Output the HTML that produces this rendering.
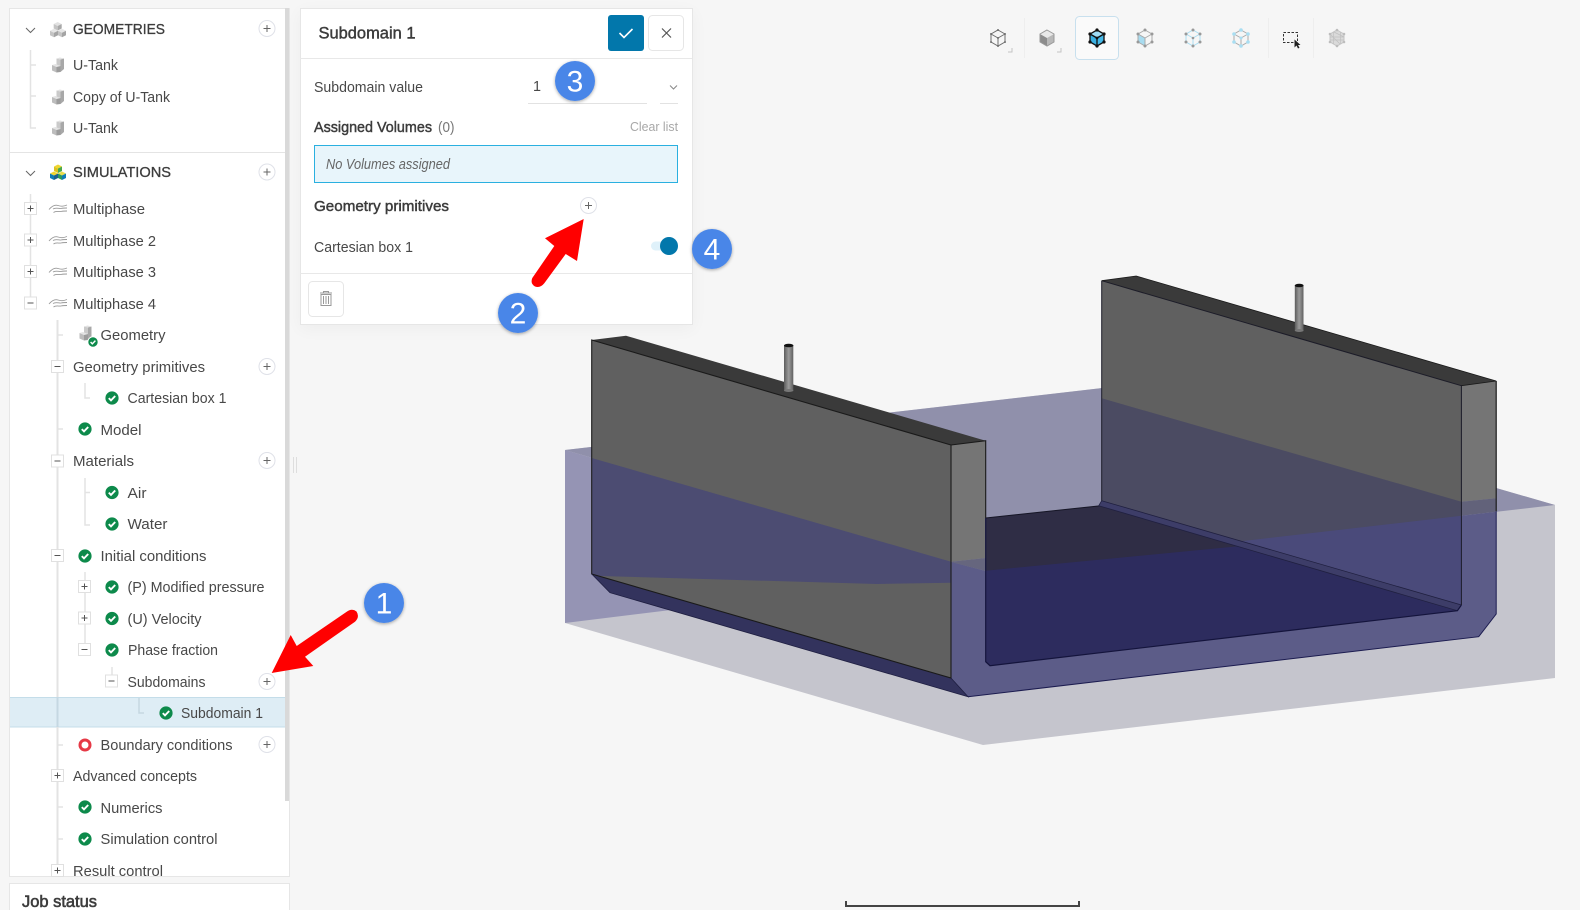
<!DOCTYPE html>
<html lang="en"><head><meta charset="utf-8"><title>Subdomain 1</title>
<style>
html,body{margin:0;padding:0;width:1580px;height:910px;overflow:hidden;background:#f6f6f6}
.p{position:absolute;background:#fff;box-sizing:border-box;border:1px solid #e6e6e6}
svg{position:absolute;left:0;top:0;display:block}
text{font-family:"Liberation Sans",sans-serif;font-size:15px;fill:#484848}
.b{stroke:#3c3c3c;stroke-width:.3;fill:#3c3c3c}
.n{fill:#fff;font-size:30px}
</style></head><body>
<div class="p" style="left:9px;top:8px;width:281px;height:869px"></div>
<div class="p" style="left:9px;top:883px;width:281px;height:27px;border-bottom:0"></div>
<div class="p" style="left:300px;top:8px;width:393px;height:317px;box-shadow:0 4px 16px rgba(0,0,0,.04)"></div>
<svg width="1580" height="910" viewBox="0 0 1580 910" xmlns="http://www.w3.org/2000/svg">
<defs>
<filter id="sh" x="-30%" y="-30%" width="160%" height="160%"><feDropShadow dx="0" dy="1" stdDeviation="1.6" flood-color="#000" flood-opacity=".35"/></filter>
<linearGradient id="pipe" x1="0" x2="1" y1="0" y2="0"><stop offset="0" stop-color="#5c5c5c"/><stop offset=".5" stop-color="#9a9a9a"/><stop offset="1" stop-color="#606060"/></linearGradient>
<g id="ok"><circle r="6.6" fill="#0d8a4b"/><path d="M-3.200 .1 -1 2.400 3.200 -2" fill="none" stroke="#fff" stroke-width="1.900"/></g>
<g id="pl"><circle r="8" fill="#fff" stroke="#dfe1e8"/><path d="M-3.500 0H3.500M0-3.500V3.500" stroke="#666" stroke-width="1"/></g>
<g id="tp"><rect x="-6" y="-6" width="12" height="12" fill="#fff" stroke="#e0e0e0"/><path d="M-3 0H3M0-3V3" stroke="#555"/></g>
<g id="tm"><rect x="-6" y="-6" width="12" height="12" fill="#fff" stroke="#e0e0e0"/><path d="M-3 0H3" stroke="#555"/></g>
<g id="part"><path d="M-2-6.500 1.500-7.500 5.500-6.500 2-5.500Z" fill="#e2e2e2"/><path d="M-2-6.500 2-5.500V1L-2 0Z" fill="#cacaca"/><path d="M2-5.500 5.500-6.500V4L2 7Z" fill="#a8a8a8"/><path d="M-6.500 0-3-1 2 1-2 2Z" fill="#e4e4e4"/><path d="M-6.500 0-2 2V7.500L-6.500 5.500Z" fill="#bdbdbd"/><path d="M-2 2 2 1V7L-2 7.500Z" fill="#9c9c9c"/></g>
<g id="flow" fill="none" stroke="#999" stroke-width=".9"><path d="M-9 1.500C-6-2-3-3.500 0-2.500S5-1.500 9-3"/><path d="M-5 1C-2-1 1 1 3 .5S7 0 9 0"/><path d="M-4.500 4.500C-2 2.500 1 4 3 3.500S7 3 9 3"/></g>
<g id="hexw"><path d="M0-8 7-4V4L0 8-7 4V-4ZM0 0V8M0 0-7-4M0 0 7-4" fill="none"/></g>
</defs>

<!-- viewport 3D model -->
<path d="M565 450 1137 384 1555 505V678L983 745 565 623Z" fill="#c5c5cd"/>
<path d="M565 450 1137 384 1555 505 983 571Z" fill="#9090ab"/>
<path d="M565 450 720 495V604L565 623Z" fill="#9594b4"/>
<!-- floor -->
<path d="M985.700 518 1100.700 505.700 1457.400 610.700 990 665.700 985.700 661.700Z" fill="#2d2c5e"/>
<path d="M985.700 518 1100.700 505.700 1241 546 985.700 570.700Z" fill="#2f2d45"/>
<path d="M985.700 518 1100.700 505.700" stroke="#161626" fill="none"/>
<!-- right wall -->
<path d="M1101.700 280.700 1461.400 385.700V605L1101.700 500.700Z" fill="#606060"/>
<path d="M1101.700 398.300 1461.400 501.700V605L1101.700 500.700Z" fill="#4b4b62"/>
<path d="M1241 541.200 1461.400 515.800V605Z" fill="#4a4a7a"/>
<path d="M1101.700 500.700 1461.400 605 1457.400 610.700 1098.700 505.700Z" fill="#3d3d68" stroke="#202040" stroke-width=".8"/>
<path d="M1101.700 280.700 1136.200 276 1496.200 381 1461.400 385.700Z" fill="#3a3a3a"/>
<path d="M1461.400 385.700 1496.200 381V498.300L1461.400 501.700Z" fill="#757575"/>
<path d="M1461.400 501.700 1496.200 498.300V511.700L1461.400 515.700Z" fill="#62627a"/>
<!-- U section -->
<path d="M951 561.700 985.700 571V661.700L990 665.700 1457.400 610.700 1461.400 605V515.700L1496.200 511.700V614L1478.700 636.700 968 696.700 951 678Z" fill="#5c5c88"/>
<path d="M951 445 985.700 441V558L951 561.700Z" fill="#757575"/>
<path d="M951 561.700 985.700 558V571L951 562Z" fill="#66667e"/>
<path d="M985.700 518V661.700L990 665.700 1457.400 610.700 1461.400 605" fill="none" stroke="#14143c" stroke-width="1.200"/>
<path d="M968 696.700 1478.700 636.700 1496.200 614V511" fill="none" stroke="#1c1c50" stroke-width="1"/>
<path d="M1496.200 381V511" fill="none" stroke="#1a1a1a" stroke-width="1.200"/>
<path d="M1101.700 280.700 1461.400 385.700V605M1101.700 280.700V500.700" fill="none" stroke="#1c1c28" stroke-width="1"/>
<path d="M1101.700 280.700 1136.200 276 1496.200 381 1461.400 385.700" fill="none" stroke="#1a1a1a" stroke-width=".8"/>
<!-- left wall -->
<path d="M591.700 574 951 678 968 696.700 610 592.700Z" fill="#33335d"/>
<path d="M591.700 340 951 445V678L591.700 574Z" fill="#606060"/>
<path d="M591.700 458 951 561.700V582.700L876.700 584 600 576 591.700 574Z" fill="#4c4c72"/>
<path d="M591.700 340 626 335.700 985.700 440.700 951 445Z" fill="#3a3a3a"/>
<path d="M591.700 340 951 445V678L591.700 574ZM951 445 985.700 440.700V518" fill="none" stroke="#1a1a1a" stroke-width="1.100"/>
<path d="M591.700 574 610 592.700 968 696.700 951 678" fill="none" stroke="#1e1e40" stroke-width=".8"/>
<rect x="784" y="345" width="9.300" height="45.700" fill="url(#pipe)"/><ellipse cx="788.700" cy="345.500" rx="4.700" ry="1.800" fill="#111"/><ellipse cx="788.700" cy="390.500" rx="4.700" ry="1.500" fill="#777"/>
<rect x="1294.800" y="285" width="8.700" height="46" fill="url(#pipe)"/><ellipse cx="1299.200" cy="285.500" rx="4.400" ry="1.800" fill="#111"/><ellipse cx="1299.200" cy="330.500" rx="4.400" ry="1.500" fill="#777"/>
<!-- scale bar -->
<path d="M846 901V906H1079V901" fill="none" stroke="#444" stroke-width="2"/>

<!-- toolbar -->
<path d="M1024.500 18V58M1268.500 18V58M1313.500 18V58" stroke="#eeeeee"/>
<rect x="1075.500" y="16.500" width="43" height="43" rx="4" fill="#fafafa" stroke="#c8e0ee"/>
<path d="M1008 52H1012V48M1057 52H1061V48" fill="none" stroke="#c4c4c4"/>
<g transform="translate(998 38)" stroke="#6e6e6e" stroke-width="1"><use href="#hexw"/><g fill="#6e6e6e" stroke="none"><circle cy="-8" r="1"/><circle cx="-7" cy="-4" r="1"/><circle cx="7" cy="-4" r="1"/><circle cx="-7" cy="4" r="1"/><circle cx="7" cy="4" r="1"/><circle cy="8" r="1"/><circle r="1"/></g></g>
<g transform="translate(1047 38)"><path d="M0-8 7-4 0 0-7-4Z" fill="#e8e8e8"/><path d="M-7-4 0 0V8L-7 4Z" fill="#8c8c8c"/><path d="M7-4 0 0V8L7 4Z" fill="#b8b8b8"/><path d="M0-8 7-4V4L0 8-7 4V-4Z" fill="none" stroke="#999"/></g>
<g transform="translate(1097 38)"><path d="M0-8 7-4 0 0-7-4Z" fill="#a0dcf5"/><path d="M-7-4 0 0V8L-7 4Z" fill="#3ab0e2"/><path d="M7-4 0 0V8L7 4Z" fill="#45b9e9"/><g stroke="#111" stroke-width="1.300"><use href="#hexw"/></g><g fill="#111"><circle cy="-8" r="1.600"/><circle cx="-7" cy="-4" r="1.600"/><circle cx="7" cy="-4" r="1.600"/><circle cx="-7" cy="4" r="1.600"/><circle cx="7" cy="4" r="1.600"/><circle cy="8" r="1.600"/><circle r="1.400"/></g></g>
<g transform="translate(1145 38)"><path d="M-7-4 0 0V8L-7 4Z" fill="#a8dcf0"/><g stroke="#aaa"><use href="#hexw"/></g><g fill="#999"><circle cy="-8" r="1.500"/><circle cx="-7" cy="-4" r="1.500"/><circle cx="7" cy="-4" r="1.500"/><circle cx="-7" cy="4" r="1.500"/><circle cx="7" cy="4" r="1.500"/><circle cy="8" r="1.500"/></g></g>
<g transform="translate(1193 38)"><g stroke="#a9def2"><use href="#hexw"/></g><g fill="#999"><circle cy="-8" r="1.500"/><circle cx="-7" cy="-4" r="1.500"/><circle cx="7" cy="-4" r="1.500"/><circle cx="-7" cy="4" r="1.500"/><circle cx="7" cy="4" r="1.500"/><circle cy="8" r="1.500"/><circle r="1.300"/></g></g>
<g transform="translate(1241 38)"><g stroke="#aaa"><use href="#hexw"/></g><g fill="#a9def2"><circle cy="-8" r="1.800"/><circle cx="-7" cy="-4" r="1.800"/><circle cx="7" cy="-4" r="1.800"/><circle cx="-7" cy="4" r="1.800"/><circle cx="7" cy="4" r="1.800"/><circle cy="8" r="1.800"/><circle r="1.500"/></g></g>
<rect x="1283.500" y="32.500" width="14" height="10" fill="none" stroke="#333" stroke-dasharray="2.500 1.500"/>
<path d="M1294.500 39.500V47.500L1296.500 45.500 1298 48.500 1299.500 47.800 1298 45H1300.500Z" fill="#222"/>
<g transform="translate(1337 38)"><path d="M0-8 7-4V4L0 8-7 4V-4Z" fill="#dadada" stroke="#c4c4c4"/><path d="M-3.500-6V6M3.500-6V6M-7-1 7-1M-7 2 7 2M-3-6 7-1M-7-4 3 6" stroke="#c0c0c0" stroke-width=".7" fill="none"/><g fill="#bdbdbd"><circle cy="-8" r="1.300"/><circle cx="-7" cy="-4" r="1.300"/><circle cx="7" cy="-4" r="1.300"/><circle cx="-7" cy="4" r="1.300"/><circle cx="7" cy="4" r="1.300"/><circle cy="8" r="1.300"/></g></g>

<!-- tree highlight + guides -->
<path d="M10 152.500H285" stroke="#e4e4e4"/>
<rect x="10" y="697" width="275" height="30.500" fill="#deedf5"/>
<path d="M10 697.500H285M10 727H285" stroke="#c4dde9"/>
<path d="M287 8V801" stroke="#d9d9d9" stroke-width="4"/>
<g fill="none" stroke="#e3e3e3" stroke-width="1.500">
<path d="M30.500 50V128H36M30.500 65H36M30.500 96H36"/>
<path d="M30.500 194V303"/>
<path d="M57.500 320V871" stroke-width="2"/>
<path d="M57.500 335H63M57.500 429H63M57.500 745H63M57.500 807H63M57.500 839H63"/>
<path d="M85 383V398H90M85 478V525H90M85 492.500H90"/>
<path d="M85 572V650"/>
<path d="M112 667V680"/>
</g>
<path d="M57.500 697V727" stroke="#c5d8e2" stroke-width="2"/>
<path d="M139 698V713H144" fill="none" stroke="#c5d8e2" stroke-width="1.500"/>

<!-- tree toggles -->
<use href="#tp" x="30.500" y="208.500"/><use href="#tp" x="30.500" y="240"/><use href="#tp" x="30.500" y="271.500"/><use href="#tm" x="30.500" y="303"/>
<use href="#tm" x="57.500" y="366.500"/><use href="#tm" x="57.500" y="461"/><use href="#tm" x="57.500" y="555.500"/>
<use href="#tp" x="84.500" y="586.500"/><use href="#tp" x="84.500" y="618"/><use href="#tm" x="84.500" y="649.500"/><use href="#tm" x="111.500" y="681"/>
<use href="#tp" x="57.500" y="775.500"/><use href="#tp" x="57.500" y="870.500"/>
<path d="M26 28 30.500 32.500 35 28M26 171 30.500 175.500 35 171" fill="none" stroke="#666"/>

<!-- plus circles -->
<use href="#pl" x="267" y="28.500"/><use href="#pl" x="267" y="172"/><use href="#pl" x="267" y="366.500"/><use href="#pl" x="267" y="460.500"/><use href="#pl" x="267" y="681.500"/><use href="#pl" x="267" y="744.500"/>

<!-- tree icons -->
<g><path d="M57.700 22 61.700 24 57.700 26 53.700 24Z" fill="#e2e2e2"/><path d="M53.700 24 57.700 26V30.500L53.700 28.500Z" fill="#c4c4c4"/><path d="M61.700 24 57.700 26V30.500L61.700 28.500Z" fill="#a8a8a8"/>
<path d="M54 28.800 58 30.800 54 32.800 50 30.800Z" fill="#e6e6e6"/><path d="M50 30.800 54 32.800V37.300L50 35.300Z" fill="#c4c4c4"/><path d="M58 30.800 54 32.800V37.300L58 35.300Z" fill="#a4a4a4"/>
<path d="M62 28.800 66 30.800 62 32.800 58 30.800Z" fill="#e6e6e6"/><path d="M58 30.800 62 32.800V37.300L58 35.300Z" fill="#c4c4c4"/><path d="M66 30.800 62 32.800V37.300L66 35.300Z" fill="#a4a4a4"/></g>
<g><path d="M58 164.500 62 166.500 58 168.500 54 166.500Z" fill="#f0d62e"/><path d="M54 166.500 58 168.500V173L54 171Z" fill="#dcc21e"/><path d="M62 166.500 58 168.500V173L62 171Z" fill="#4aa84a"/>
<path d="M54 171.500 58 173.500 54 175.500 50 173.500Z" fill="#f0d62e"/><path d="M50 173.500 54 175.500V180L50 178Z" fill="#0f7cb5"/><path d="M58 173.500 54 175.500V180L58 178Z" fill="#1b5f8c"/>
<path d="M62 171.500 66 173.500 62 175.500 58 173.500Z" fill="#e8dc4a"/><path d="M58 173.500 62 175.500V180L58 178Z" fill="#2c9a5a"/><path d="M66 173.500 62 175.500V180L66 178Z" fill="#0f7cb5"/></g>
<use href="#part" x="58.500" y="65"/><use href="#part" x="58.500" y="97"/><use href="#part" x="58.500" y="128"/>
<use href="#flow" x="58" y="208"/><use href="#flow" x="58" y="239.500"/><use href="#flow" x="58" y="271"/><use href="#flow" x="58" y="302.500"/>
<use href="#part" x="86" y="333"/><g transform="translate(93 342)"><circle r="5.200" fill="#0d8a4b" stroke="#fff"/><path d="M-2.400 0-.7 1.800 2.400-1.400" fill="none" stroke="#fff" stroke-width="1.400"/></g>
<use href="#ok" x="85" y="429"/><use href="#ok" x="85" y="556"/><use href="#ok" x="85" y="807"/><use href="#ok" x="85" y="839"/>
<use href="#ok" x="112" y="398"/><use href="#ok" x="112" y="492.500"/><use href="#ok" x="112" y="524"/><use href="#ok" x="112" y="587"/><use href="#ok" x="112" y="618.500"/><use href="#ok" x="112" y="650"/><use href="#ok" x="166" y="713"/>
<circle cx="85" cy="745" r="5" fill="#fff" stroke="#e63946" stroke-width="3"/>

<!-- tree text -->
<text class="b" x="73" y="34" textLength="92" lengthAdjust="spacingAndGlyphs">GEOMETRIES</text>
<text x="73" y="70" textLength="45" lengthAdjust="spacingAndGlyphs">U-Tank</text>
<text x="73" y="102" textLength="97" lengthAdjust="spacingAndGlyphs">Copy of U-Tank</text>
<text x="73" y="133" textLength="45" lengthAdjust="spacingAndGlyphs">U-Tank</text>
<text class="b" x="73" y="177" textLength="98" lengthAdjust="spacingAndGlyphs">SIMULATIONS</text>
<text x="73" y="214" textLength="72" lengthAdjust="spacingAndGlyphs">Multiphase</text>
<text x="73" y="246" textLength="83" lengthAdjust="spacingAndGlyphs">Multiphase 2</text>
<text x="73" y="277" textLength="83" lengthAdjust="spacingAndGlyphs">Multiphase 3</text>
<text x="73" y="309" textLength="83" lengthAdjust="spacingAndGlyphs">Multiphase 4</text>
<text x="100.500" y="340" textLength="65" lengthAdjust="spacingAndGlyphs">Geometry</text>
<text x="73" y="372" textLength="132" lengthAdjust="spacingAndGlyphs">Geometry primitives</text>
<text x="127.500" y="403" textLength="99" lengthAdjust="spacingAndGlyphs">Cartesian box 1</text>
<text x="100.500" y="435" textLength="41" lengthAdjust="spacingAndGlyphs">Model</text>
<text x="73" y="466" textLength="61" lengthAdjust="spacingAndGlyphs">Materials</text>
<text x="127.500" y="498" textLength="19" lengthAdjust="spacingAndGlyphs">Air</text>
<text x="127.500" y="529" textLength="40" lengthAdjust="spacingAndGlyphs">Water</text>
<text x="100.500" y="561" textLength="106" lengthAdjust="spacingAndGlyphs">Initial conditions</text>
<text x="127.500" y="592" textLength="137" lengthAdjust="spacingAndGlyphs">(P) Modified pressure</text>
<text x="127.500" y="624" textLength="74" lengthAdjust="spacingAndGlyphs">(U) Velocity</text>
<text x="128" y="655" textLength="90" lengthAdjust="spacingAndGlyphs">Phase fraction</text>
<text x="127.500" y="687" textLength="78" lengthAdjust="spacingAndGlyphs">Subdomains</text>
<text x="181" y="718" textLength="82" lengthAdjust="spacingAndGlyphs">Subdomain 1</text>
<text x="100.500" y="750" textLength="132" lengthAdjust="spacingAndGlyphs">Boundary conditions</text>
<text x="73" y="781" textLength="124" lengthAdjust="spacingAndGlyphs">Advanced concepts</text>
<text x="100.500" y="813" textLength="62" lengthAdjust="spacingAndGlyphs">Numerics</text>
<text x="100.500" y="844" textLength="117" lengthAdjust="spacingAndGlyphs">Simulation control</text>
<text x="73" y="876" textLength="90" lengthAdjust="spacingAndGlyphs">Result control</text>
<text class="b" x="22" y="907" style="font-size:17px;stroke-width:.6" textLength="75" lengthAdjust="spacingAndGlyphs">Job status</text>
<path d="M293.500 457V473M296.500 457V473" stroke="#dedede"/>

<!-- subdomain panel -->
<path d="M300 58.500H692M300 273.500H692" stroke="#e8e8e8"/>
<text class="b" x="318.500" y="38.500" style="font-size:16.500px;stroke-width:.45" textLength="97" lengthAdjust="spacingAndGlyphs">Subdomain 1</text>
<rect x="608" y="15" width="36" height="36" rx="3" fill="#0277ab"/>
<path d="M619.500 33 624 37.500 632.500 29" fill="none" stroke="#fff" stroke-width="1.600"/>
<rect x="648.500" y="15.500" width="35" height="35" rx="4" fill="#fff" stroke="#e6e6e6"/>
<path d="M662 28.500 671 37.500M671 28.500 662 37.500" stroke="#555" stroke-width="1.200"/>
<text x="314" y="92" textLength="109" lengthAdjust="spacingAndGlyphs">Subdomain value</text>
<text x="533" y="91" textLength="8" lengthAdjust="spacingAndGlyphs">1</text>
<path d="M528 103.500H647M660 103.500H678" stroke="#e2e2e2"/>
<path d="M670 85.500 673.500 89 677 85.500" fill="none" stroke="#888"/>
<text class="b" x="314" y="132" style="stroke-width:.45" textLength="118" lengthAdjust="spacingAndGlyphs">Assigned Volumes</text>
<text x="438" y="132" style="fill:#777" textLength="16.500" lengthAdjust="spacingAndGlyphs">(0)</text>
<text x="630" y="131" style="font-size:12.500px;fill:#a8a8a8" textLength="48" lengthAdjust="spacingAndGlyphs">Clear list</text>
<rect x="314.500" y="145.500" width="363" height="37" fill="#e8f5fb" stroke="#2ab0e0" stroke-width="1"/>
<text x="326" y="169" style="font-style:italic;fill:#666" textLength="124" lengthAdjust="spacingAndGlyphs">No Volumes assigned</text>
<text class="b" x="314" y="211" style="stroke-width:.45" textLength="135" lengthAdjust="spacingAndGlyphs">Geometry primitives</text>
<use href="#pl" x="588.500" y="205.500"/>
<text x="314" y="252" textLength="99" lengthAdjust="spacingAndGlyphs">Cartesian box 1</text>
<rect x="651" y="241.500" width="20" height="9" rx="4.500" fill="#dff1fa"/>
<circle cx="669" cy="246" r="9" fill="#0277ab"/>
<rect x="308.500" y="281.500" width="35" height="35" rx="4" fill="#fff" stroke="#e6e6e6"/>
<path d="M321 294.500H331V305.500H321ZM320 293H332M323.500 293V291.500H328.500V293M323.500 296V304M326 296V304M328.500 296V304" fill="none" stroke="#999" stroke-width="1"/>

<!-- arrows -->
<path d="M271.700 673 290.700 635 296.700 646 346.700 611.700Q352 608 356.500 611.500 360 617 355 621.700L305 656.700 313.300 666Z" fill="#f00"/>
<path d="M583.700 219 577 261 565.700 254 544.300 283.300Q540 288.500 535 286.500 530 283.500 532.300 278L554.300 246 545 238.300Z" fill="#f00"/>

<!-- number badges -->
<g filter="url(#sh)" fill="#4a86e8"><circle cx="384" cy="603" r="20"/><circle cx="518" cy="313" r="20"/><circle cx="575" cy="81" r="20"/><circle cx="712" cy="249" r="20"/></g>
<text class="n" x="384" y="613.500" text-anchor="middle">1</text>
<text class="n" x="518" y="323.500" text-anchor="middle">2</text>
<text class="n" x="575" y="91.500" text-anchor="middle">3</text>
<text class="n" x="712" y="259.500" text-anchor="middle">4</text>
</svg>
</body></html>
